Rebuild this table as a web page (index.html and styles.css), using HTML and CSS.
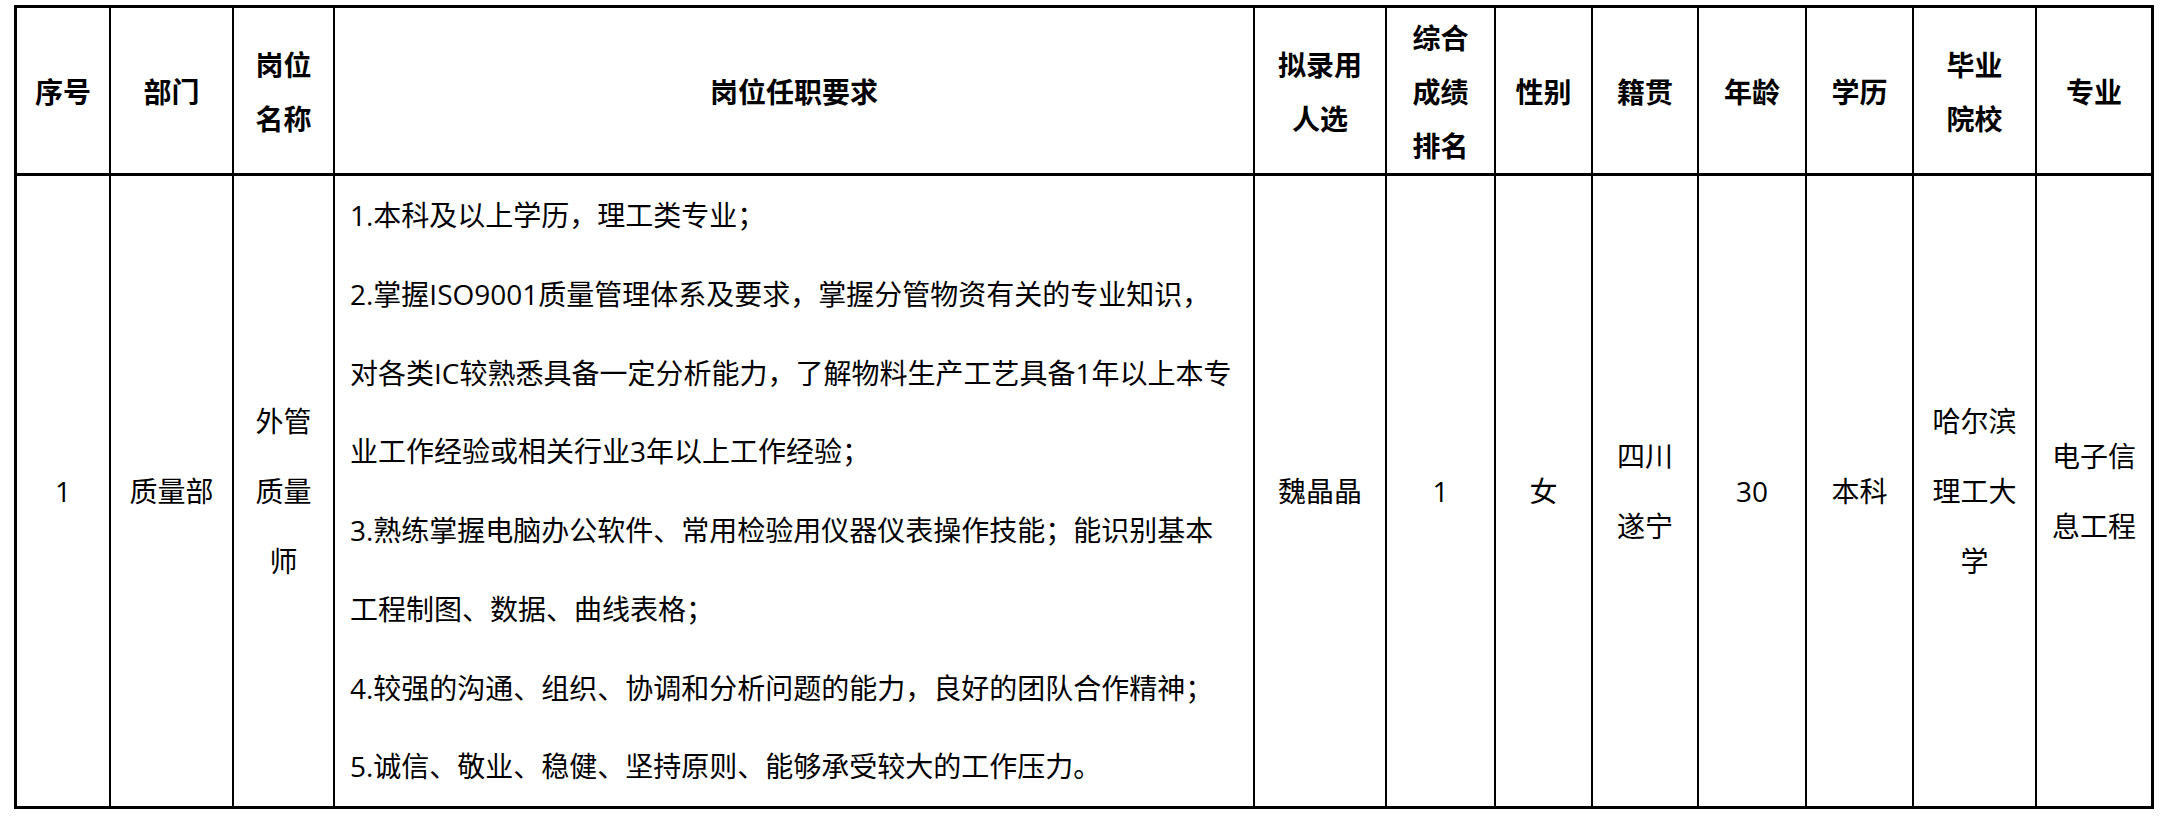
FILE: index.html
```html
<!DOCTYPE html>
<html lang="zh-CN">
<head>
<meta charset="utf-8">
<title>拟录用人员公示</title>
<link rel="stylesheet" href="styles.css">
</head>
<body>
<div class="sheet">
  <div class="table">
    <div class="cell head">序号</div>
    <div class="cell head">部门</div>
    <div class="cell head">岗位<br>名称</div>
    <div class="cell head">岗位任职要求</div>
    <div class="cell head">拟录用<br>人选</div>
    <div class="cell head">综合<br>成绩<br>排名</div>
    <div class="cell head">性别</div>
    <div class="cell head">籍贯</div>
    <div class="cell head">年龄</div>
    <div class="cell head">学历</div>
    <div class="cell head">毕业<br>院校</div>
    <div class="cell head last">专业</div>

    <div class="cell data">1</div>
    <div class="cell data">质量部</div>
    <div class="cell data">外管<br>质量<br>师</div>
    <div class="cell data req">
      <div class="req-text">
        <p class="item">1.本科及以上学历，理工类专业；</p>
        <p class="item">2.掌握ISO9001质量管理体系及要求，掌握分管物资有关的专业知识，<br>对各类IC较熟悉具备一定分析能力，了解物料生产工艺具备1年以上本专<br>业工作经验或相关行业3年以上工作经验；</p>
        <p class="item">3.熟练掌握电脑办公软件、常用检验用仪器仪表操作技能；能识别基本<br>工程制图、数据、曲线表格；</p>
        <p class="item">4.较强的沟通、组织、协调和分析问题的能力，良好的团队合作精神；</p>
        <p class="item">5.诚信、敬业、稳健、坚持原则、能够承受较大的工作压力。</p>
      </div>
    </div>
    <div class="cell data">魏晶晶</div>
    <div class="cell data">1</div>
    <div class="cell data">女</div>
    <div class="cell data">四川<br>遂宁</div>
    <div class="cell data">30</div>
    <div class="cell data">本科</div>
    <div class="cell data">哈尔滨<br>理工大<br>学</div>
    <div class="cell data last">电子信<br>息工程</div>
  </div>
</div>
</body>
</html>
```

FILE: styles.css
```css
html, body {
  margin: 0;
  padding: 0;
  background: #ffffff;
}

.sheet {
  padding: 5px 0 0 14px;
}

.table {
  display: grid;
  grid-template-columns: 94px 123px 101px 920px 132px 109px 97px 106px 108px 107px 123px 114px;
  grid-template-rows: 168px 630px;
  width: max-content;
  border: 3px solid #000;
  font-family: "Open Sans", "Noto Sans CJK SC", sans-serif;
  font-size: 28px;
  color: #000;
}

.cell {
  display: flex;
  align-items: center;
  justify-content: center;
  text-align: center;
  border-right: 2px solid #000;
  white-space: nowrap;
}

.cell.last {
  border-right: none;
}

.head {
  border-bottom: 3px solid #000;
  font-weight: 700;
  line-height: 54px;
  padding-top: 2px;
}

.data {
  line-height: 70px;
}

.req {
  justify-content: flex-start;
  align-items: flex-start;
  text-align: left;
  padding-left: 15px;
}

.req-text {
  line-height: 78.75px;
}

.item {
  margin: 0;
}
```
